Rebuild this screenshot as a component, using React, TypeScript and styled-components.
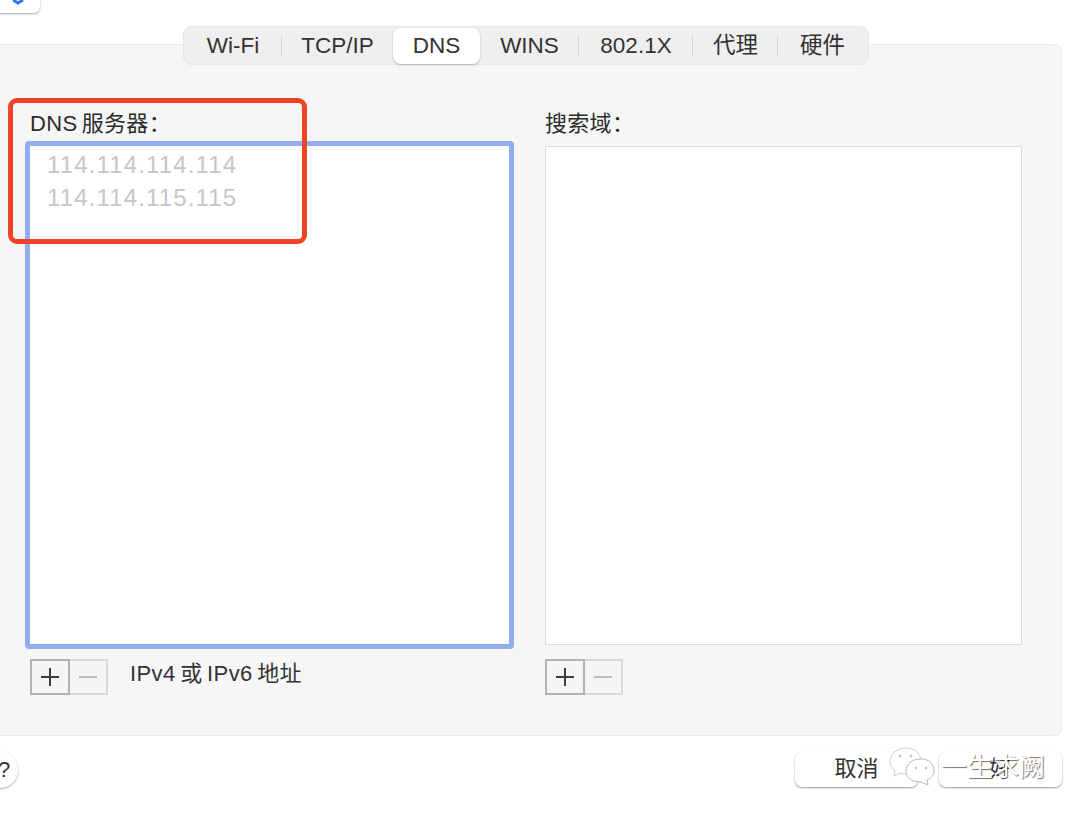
import React from "react";
import styled, { createGlobalStyle } from "styled-components";

const Global = createGlobalStyle`
  html, body {
    margin: 0;
    padding: 0;
    background: #fff;
    overflow: hidden;
  }
  body {
    font-family: "Liberation Sans", "Noto Sans CJK SC", sans-serif;
    color: #2e2e2e;
  }
`;

const Stage = styled.div`
  position: relative;
  width: 1080px;
  height: 817px;
  overflow: hidden;
  display: flex;
  flex-direction: column;
`;

const TopStub = styled.div`
  width: 50px;
  height: 13px;
  margin-left: -10px;
  background: #fff;
  border-radius: 0 0 6px 6px;
  box-shadow: 0 1px 2px rgba(0, 0, 0, 0.35);
  box-sizing: border-box;
  padding-left: 21px;
  display: flex;
  align-items: flex-start;
`;

const Tabs = styled.div`
  position: relative;
  z-index: 1;
  align-self: flex-start;
  margin: 13px 0 -21px 183px;
  height: 39px;
  width: 686px;
  box-sizing: border-box;
  background: #efefef;
  border: 1px solid #e6e6e6;
  border-radius: 9px;
  display: flex;
  align-items: center;
`;

const Tab = styled.div<{ $width: number; $active?: boolean; $divider?: boolean }>`
  position: relative;
  width: ${(p) => p.$width}px;
  height: 36px;
  line-height: 36px;
  text-align: center;
  font-size: 22.5px;
  color: #333;
  background: ${(p) => (p.$active ? "#fff" : "transparent")};
  border-radius: 8px;
  box-shadow: ${(p) => (p.$active ? "0 1px 2px rgba(0,0,0,0.25)" : "none")};
  &::after {
    content: "";
    display: ${(p) => (p.$divider ? "block" : "none")};
    position: absolute;
    right: 0;
    top: 8px;
    height: 20px;
    width: 1px;
    background: #d4d4d4;
  }
`;

const Panel = styled.div`
  margin-left: -10px;
  width: 1072px;
  height: 692px;
  box-sizing: border-box;
  background: #f6f6f6;
  border: 1px solid #ececec;
  border-radius: 7px;
  padding: 60px 39px 0 34px;
  display: flex;
  gap: 31px;
`;

const Column = styled.div<{ $width: number }>`
  width: ${(p) => p.$width}px;
  display: flex;
  flex-direction: column;
`;

const Label = styled.div<{ $indent: number }>`
  height: 36px;
  margin-left: ${(p) => p.$indent}px;
  font-size: 22px;
  line-height: 38px;
  color: #2b2b2b;
  letter-spacing: 0.3px;
  word-spacing: -2px;
`;

const ServerBox = styled.div`
  height: 508px;
  box-sizing: border-box;
  background: #fff;
  border: 5px solid #90aef0;
  border-radius: 4px;
  padding: 2px 0 0 17px;
`;

const SearchBox = styled.div`
  height: 499px;
  margin-top: 5px;
  box-sizing: border-box;
  background: #fff;
  border: 1px solid #dcdcdc;
`;

const Address = styled.div`
  height: 33px;
  line-height: 33px;
  font-size: 24px;
  letter-spacing: 1.15px;
  color: #c6c6c6;
`;

const Footer = styled.div<{ $top: number; $indent: number }>`
  margin: ${(p) => p.$top}px 0 0 ${(p) => p.$indent}px;
  display: flex;
  align-items: flex-start;
`;

const Stepper = styled.div`
  display: flex;
  width: 78px;
  height: 36px;
`;

const StepButton = styled.div<{ $on?: boolean }>`
  flex: 1;
  box-sizing: border-box;
  display: flex;
  align-items: center;
  justify-content: center;
  background: #f5f5f5;
  border: 2px solid ${(p) => (p.$on ? "#b3b3b3" : "#d9d9d9")};
  border-left-width: ${(p) => (p.$on ? 2 : 0)}px;
`;

const Hint = styled.div`
  margin-left: 22px;
  font-size: 22px;
  line-height: 30px;
  color: #333;
  letter-spacing: 0.4px;
  word-spacing: -2px;
`;

const BottomBar = styled.div`
  margin-top: 16px;
  height: 35px;
  display: flex;
  align-items: center;
  padding-right: 18px;
`;

const Help = styled.div`
  width: 36px;
  height: 36px;
  margin-left: -18px;
  box-sizing: border-box;
  padding-left: 8px;
  border-radius: 50%;
  background: #fff;
  box-shadow: 0 1px 2px rgba(0, 0, 0, 0.35);
  font-size: 22px;
  line-height: 36px;
  text-align: center;
  color: #333;
`;

const Actions = styled.div`
  margin-left: auto;
  display: flex;
  gap: 21px;
`;

const ActionButton = styled.div`
  width: 123px;
  height: 35px;
  border-radius: 7px;
  background: #fff;
  box-shadow: 0 1px 2px rgba(0, 0, 0, 0.4);
  font-size: 22px;
  line-height: 33px;
  text-align: center;
  color: #333;
`;

const Highlight = styled.div`
  position: absolute;
  left: 8px;
  top: 98px;
  width: 299px;
  height: 146px;
  box-sizing: border-box;
  border: 5px solid #ee4326;
  border-radius: 9px;
`;

const Watermark = styled.div`
  position: absolute;
  left: 889px;
  top: 747px;
  display: flex;
  align-items: center;
  gap: 6px;
`;

const WatermarkText = styled.div`
  font-size: 26px;
  line-height: 40px;
  color: #fff;
  text-shadow: 1px 1px 1px rgba(0, 0, 0, 0.55);
`;

const tabs = [
  { name: "Wi-Fi", width: 98, divider: true },
  { name: "TCP/IP", width: 111 },
  { name: "DNS", width: 87, active: true },
  { name: "WINS", width: 99, divider: true },
  { name: "802.1X", width: 114, divider: true },
  { name: "代理", width: 85, divider: true },
  { name: "硬件", width: 89 },
];

const Chevron = () => (
  <svg width="14" height="5" viewBox="0 0 14 5">
    <path d="M2 0 L7 3 L12 0" fill="none" stroke="#2f7bf0" strokeWidth="3" />
  </svg>
);

const Plus = () => (
  <svg width="20" height="20" viewBox="0 0 20 20">
    <path d="M10 1 V19 M1 10 H19" stroke="#3c3c3c" strokeWidth="2" />
  </svg>
);

const Minus = () => (
  <svg width="20" height="20" viewBox="0 0 20 20">
    <path d="M1 10 H19" stroke="#bdbdbd" strokeWidth="2" />
  </svg>
);

const WeChat = () => (
  <svg width="46" height="40" viewBox="0 0 46 40">
    <path
      d="M17 1 C8 1 1 7 1 14 C1 18 3 21 6 24 L5 29 L11 26 C13 27 15 27 17 27 C26 27 32 21 32 14 C32 7 26 1 17 1 Z"
      fill="#fff"
      stroke="#cfcfcf"
      strokeWidth="1"
    />
    <path
      d="M32 12 C23 12 17 17 17 24 C17 31 23 35 32 35 L39 38 L38 33 C42 31 45 28 45 24 C45 17 40 12 32 12 Z"
      fill="#fff"
      stroke="#b8b8b8"
      strokeWidth="1"
    />
    <circle cx="11" cy="9" r="1.4" fill="#c4c4c4" />
    <circle cx="22" cy="9" r="1.4" fill="#c4c4c4" />
    <circle cx="27" cy="21" r="1.2" fill="#bdbdbd" />
    <circle cx="37" cy="21" r="1.2" fill="#bdbdbd" />
  </svg>
);

const Steps = () => (
  <Stepper>
    <StepButton $on>
      <Plus />
    </StepButton>
    <StepButton>
      <Minus />
    </StepButton>
  </Stepper>
);

const App: React.FC = () => (
  <Stage>
    <Global />
    <TopStub>
      <Chevron />
    </TopStub>
    <Tabs>
      {tabs.map((t) => (
        <Tab key={t.name} $width={t.width} $active={t.active} $divider={t.divider}>
          {t.name}
        </Tab>
      ))}
    </Tabs>
    <Panel>
      <Column $width={489}>
        <Label $indent={5}>DNS 服务器：</Label>
        <ServerBox>
          <Address>114.114.114.114</Address>
          <Address>114.114.115.115</Address>
        </ServerBox>
        <Footer $top={10} $indent={5}>
          <Steps />
          <Hint>IPv4 或 IPv6 地址</Hint>
        </Footer>
      </Column>
      <Column $width={477}>
        <Label $indent={0}>搜索域：</Label>
        <SearchBox />
        <Footer $top={14} $indent={0}>
          <Steps />
        </Footer>
      </Column>
    </Panel>
    <BottomBar>
      <Help>?</Help>
      <Actions>
        <ActionButton>取消</ActionButton>
        <ActionButton>好</ActionButton>
      </Actions>
    </BottomBar>
    <Highlight />
    <Watermark>
      <WeChat />
      <WatermarkText>一生求阙</WatermarkText>
    </Watermark>
  </Stage>
);

export default App;
